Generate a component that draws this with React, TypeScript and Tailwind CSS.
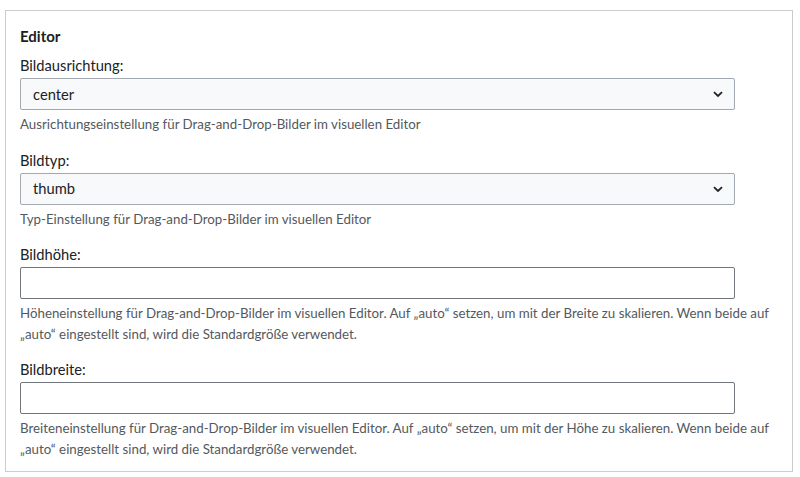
import React from "react"

function Chevron() {
  return (
    <svg width="12" height="12" viewBox="0 0 12 12" className="text-[#202122]">
      <path d="M2 4.2 L6 8 L10 4.2" fill="none" stroke="currentColor" strokeWidth="1.8" />
    </svg>
  )
}

function SelectField({ label, value, help }: { label: string; value: string; help: string }) {
  return (
    <div className="flex flex-col">
      <label className="text-[14.7px] leading-[22px] text-[#202122] mb-[2px]">{label}</label>
      <div className="flex items-center justify-between w-[715px] h-[32px] bg-[#f8f9fa] border border-[#a2a9b1] rounded-[2px] pl-[12px] pr-[10px]">
        <span className="text-[14.7px] text-[#202122]">{value}</span>
        <Chevron />
      </div>
      <p className="text-[13.3px] leading-[20.5px] text-[#54595d] mt-[4px]">{help}</p>
    </div>
  )
}

function TextField({ label, help }: { label: string; help: string }) {
  return (
    <div className="flex flex-col">
      <label className="text-[14.7px] leading-[22px] text-[#202122] mb-[2px]">{label}</label>
      <input
        type="text"
        className="w-[715px] h-[32px] bg-white border border-[#72777d] rounded-[2px] px-[12px] outline-none"
      />
      <p className="text-[13.3px] leading-[20.5px] text-[#54595d] mt-[4px]">{help}</p>
    </div>
  )
}

export default function App() {
  return (
    <div className="pl-[5px] pt-[10px] bg-white min-h-[477px]" style={{ fontFamily: "Lato, 'Open Sans', sans-serif" }}>
      <div className="w-[788px] h-[462px] border border-[#c8ccd1] pt-[15px] pl-[14px] pr-[14px]">
        <h3 className="text-[15px] font-bold leading-[20px] text-[#202122] mb-[8px]">Editor</h3>
        <div className="flex flex-col gap-[14px]">
          <SelectField
            label="Bildausrichtung:"
            value="center"
            help="Ausrichtungseinstellung für Drag-and-Drop-Bilder im visuellen Editor"
          />
          <SelectField
            label="Bildtyp:"
            value="thumb"
            help="Typ-Einstellung für Drag-and-Drop-Bilder im visuellen Editor"
          />
          <TextField
            label="Bildhöhe:"
            help="Höheneinstellung für Drag-and-Drop-Bilder im visuellen Editor. Auf „auto“ setzen, um mit der Breite zu skalieren. Wenn beide auf „auto“ eingestellt sind, wird die Standardgröße verwendet."
          />
          <TextField
            label="Bildbreite:"
            help="Breiteneinstellung für Drag-and-Drop-Bilder im visuellen Editor. Auf „auto“ setzen, um mit der Höhe zu skalieren. Wenn beide auf „auto“ eingestellt sind, wird die Standardgröße verwendet."
          />
        </div>
      </div>
    </div>
  )
}
